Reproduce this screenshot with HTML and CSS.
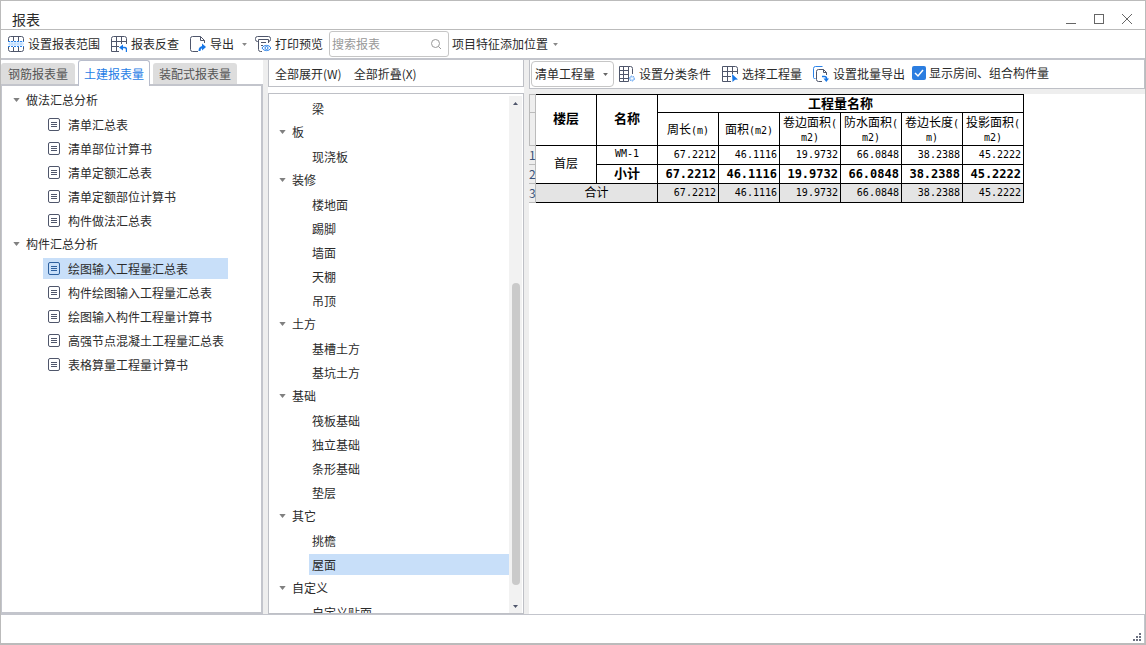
FILE: index.html
```html
<!DOCTYPE html>
<html lang="zh-CN">
<head>
<meta charset="utf-8">
<title>报表</title>
<link rel="stylesheet" href="styles.css">
</head>
<body>
<svg class="defs" width="0" height="0" aria-hidden="true">
  <symbol id="doc" viewBox="0 0 14 14"><rect x="1.5" y=".5" width="11" height="12" rx="1.5" fill="none" stroke="currentColor"/><path d="M4 4.500h6M4 6.500h6M4 8.500h6" stroke="currentColor"/></symbol>
  <symbol id="caret" viewBox="0 0 8 5"><path d="M0 0h8L4 5z" fill="currentColor"/></symbol>
</svg>
<div class="window">
  <header class="titlebar">
    <h1>报表</h1>
    <div class="window-buttons">
      <button aria-label="最小化"><svg width="12" height="12"><path d="M1 10.500h10" stroke="currentColor"/></svg></button>
      <button aria-label="最大化"><svg width="12" height="12"><rect x="1.500" y="1.500" width="9" height="9" fill="none" stroke="currentColor"/></svg></button>
      <button aria-label="关闭"><svg width="12" height="12"><path d="M1 1l10 10M11 1L1 11" stroke="currentColor"/></svg></button>
    </div>
  </header>

  <div class="toolbar main-toolbar">
    <button class="tool"><svg width="16" height="16" fill="none"><rect x="1" y="5" width="14" height="5" fill="#d6eaff"/><path d="M.5 5V2.500a2 2 0 0 1 2-2h11a2 2 0 0 1 2 2V5M.5 11v2.500a2 2 0 0 0 2 2h11a2 2 0 0 0 2-2V11M5.500.5V5M10.500.5V5M5.500 11v4.500M10.500 11v4.500" stroke="#4f566b"/><path d="M0 5.500h16M0 10.500h16" stroke="#2b83ea" stroke-dasharray="2 1"/><path d="M.5 8h16" stroke="#7bb5f5" stroke-dasharray="1 2"/></svg>设置报表范围</button>
    <button class="tool gap-l"><svg width="16" height="16" fill="none"><path d="M15.500 8V2.500a2 2 0 0 0-2-2h-11a2 2 0 0 0-2 2v13H8M.5 5.500h15M.5 10.500H8M5.500.5v15M10.500.5V8" stroke="#4f566b"/><path d="M10 11.500h3.500a2 2 0 0 1 2 2V16" stroke="#1677e8" stroke-width="1.400"/><path d="M12 8.500v6l-4-3z" fill="#1677e8"/></svg>报表反查</button>
    <button class="tool gap-l"><svg width="16" height="16" fill="none"><path d="M8 15.500H2.500a2 2 0 0 1-2-2v-11a2 2 0 0 1 2-2h8l4 4V7M10.500.5v4h4" stroke="#4f566b"/><path d="M9.500 15c0-3 1.500-4 4-4" stroke="#1677e8" stroke-width="2"/><path d="M12 7.500l4 3.500-4 3.500z" fill="#1677e8"/></svg>导出</button>
    <button class="drop" aria-label="导出选项"><svg width="5" height="3"><use href="#caret"/></svg></button>
    <button class="tool"><svg width="16" height="16" fill="none"><path d="M3.500 5.500h-1a2 2 0 0 1-2-2v-1a2 2 0 0 1 2-2h11a2 2 0 0 1 2 2v1a2 2 0 0 1-2 2M13.500 7V3.500h-10v10a2 2 0 0 0 2 2H7M6 6.500h5M6 9.500h2" stroke="#4f566b"/><path d="M7 12c2-3.500 7-3.500 9 0-2 3.500-7 3.500-9 0z" stroke="#2b83ea" fill="#fff"/><circle cx="11.500" cy="12" r="1.500" stroke="#2b83ea"/></svg>打印预览</button>
    <label class="search"><input type="text" placeholder="搜索报表" aria-label="搜索报表"><svg width="12" height="12" fill="none" stroke="#999"><circle cx="5.500" cy="5.500" r="4"/><path d="M8.500 8.500l2.500 2.500"/></svg></label>
    <button class="tool feature">项目特征添加位置<svg class="small-caret" width="5" height="3"><use href="#caret"/></svg></button>
  </div>

  <main class="workspace">
    <section class="reports">
      <div class="tabs" role="tablist">
        <button role="tab">钢筋报表量</button>
        <button role="tab" class="active" aria-selected="true">土建报表量</button>
        <button role="tab">装配式报表量</button>
      </div>
      <div class="report-tree">
        <ul class="tree">
          <li><button class="group"><svg width="7" height="4"><use href="#caret"/></svg>做法汇总分析</button>
            <ul>
              <li><button class="leaf"><svg width="14" height="14"><use href="#doc"/></svg>清单汇总表</button></li>
              <li><button class="leaf"><svg width="14" height="14"><use href="#doc"/></svg>清单部位计算书</button></li>
              <li><button class="leaf"><svg width="14" height="14"><use href="#doc"/></svg>清单定额汇总表</button></li>
              <li><button class="leaf"><svg width="14" height="14"><use href="#doc"/></svg>清单定额部位计算书</button></li>
              <li><button class="leaf"><svg width="14" height="14"><use href="#doc"/></svg>构件做法汇总表</button></li>
            </ul>
          </li>
          <li><button class="group"><svg width="7" height="4"><use href="#caret"/></svg>构件汇总分析</button>
            <ul>
              <li><button class="leaf selected"><svg width="14" height="14"><use href="#doc"/></svg>绘图输入工程量汇总表</button></li>
              <li><button class="leaf"><svg width="14" height="14"><use href="#doc"/></svg>构件绘图输入工程量汇总表</button></li>
              <li><button class="leaf"><svg width="14" height="14"><use href="#doc"/></svg>绘图输入构件工程量计算书</button></li>
              <li><button class="leaf"><svg width="14" height="14"><use href="#doc"/></svg>高强节点混凝土工程量汇总表</button></li>
              <li><button class="leaf"><svg width="14" height="14"><use href="#doc"/></svg>表格算量工程量计算书</button></li>
            </ul>
          </li>
        </ul>
      </div>
    </section>

    <section class="components">
      <div class="fold-bar"><button>全部展开(W)</button><button>全部折叠(X)</button></div>
      <div class="component-list">
        <ul class="tree">
          <li><ul><li><button class="leaf">梁</button></li></ul></li>
          <li><button class="group"><svg width="7" height="4"><use href="#caret"/></svg>板</button>
            <ul><li><button class="leaf">现浇板</button></li></ul></li>
          <li><button class="group"><svg width="7" height="4"><use href="#caret"/></svg>装修</button>
            <ul>
              <li><button class="leaf">楼地面</button></li>
              <li><button class="leaf">踢脚</button></li>
              <li><button class="leaf">墙面</button></li>
              <li><button class="leaf">天棚</button></li>
              <li><button class="leaf">吊顶</button></li>
            </ul></li>
          <li><button class="group"><svg width="7" height="4"><use href="#caret"/></svg>土方</button>
            <ul>
              <li><button class="leaf">基槽土方</button></li>
              <li><button class="leaf">基坑土方</button></li>
            </ul></li>
          <li><button class="group"><svg width="7" height="4"><use href="#caret"/></svg>基础</button>
            <ul>
              <li><button class="leaf">筏板基础</button></li>
              <li><button class="leaf">独立基础</button></li>
              <li><button class="leaf">条形基础</button></li>
              <li><button class="leaf">垫层</button></li>
            </ul></li>
          <li><button class="group"><svg width="7" height="4"><use href="#caret"/></svg>其它</button>
            <ul>
              <li><button class="leaf">挑檐</button></li>
              <li><button class="leaf selected">屋面</button></li>
            </ul></li>
          <li><button class="group"><svg width="7" height="4"><use href="#caret"/></svg>自定义</button>
            <ul><li><button class="leaf">自定义贴面</button></li></ul></li>
        </ul>
        <div class="scrollbar" aria-hidden="true">
          <svg width="5" height="3"><path d="M0 3h5L2.500 0z" fill="#4f566b"/></svg>
          <div class="track"><div class="thumb"></div></div>
          <svg width="5" height="3"><path d="M0 0h5L2.500 3z" fill="#4f566b"/></svg>
        </div>
      </div>
    </section>

    <section class="result">
      <div class="toolbar result-toolbar">
        <div class="select-wrap"><select aria-label="工程量类型"><option>清单工程量</option></select><svg width="5" height="3"><use href="#caret"/></svg></div>
        <button class="tool"><svg width="16" height="16" fill="none"><path d="M9.500 15.500h-9V.5h9v15M.5 4.500h9M.5 8.500h9M.5 12.500h9M4.500.5v15M9.500.5h2a2 2 0 0 1 2 2V8" stroke="#4f566b"/><circle cx="13" cy="12.500" r="2.500" fill="#b9d8fb" stroke="#5b9ff0" stroke-dasharray="1.500 1"/><circle cx="13" cy="12.500" r="1" fill="#fff"/></svg>设置分类条件</button>
        <button class="tool gap-l"><svg width="16" height="16" fill="none"><path d="M15.500 8V2.500a2 2 0 0 0-2-2H.5v15H9M.5 5.500h15M.5 10.500H9M5.500.5v15M10.500.5V8" stroke="#4f566b"/><path d="M10 8l6 5.500-3 .2L10.500 16z" fill="#1677e8"/></svg>选择工程量</button>
        <button class="tool gap-l"><svg width="16" height="16" fill="none"><path d="M2.500 12.500h-1a1 1 0 0 1-1-1v-9a2 2 0 0 1 2-2h7" stroke="#2b83ea"/><path d="M9 15.500H5.500a2 2 0 0 1-2-2v-8a2 2 0 0 1 2-2h5l3 3V9M10.500 3.500v3h3" stroke="#4f566b"/><path d="M9 10.500h2.500a2 2 0 0 1 2 2V14" stroke="#1677e8" stroke-width="1.500"/><path d="M10.500 12.500h5.500L13.300 16z" fill="#1677e8"/></svg>设置批量导出</button>
        <label class="check"><input type="checkbox" checked>显示房间、组合构件量</label>
      </div>
      <div class="sheet">
        <table>
          <colgroup><col class="index-col"><col span="8" class="data-col"></colgroup>
          <thead>
            <tr><td class="index"></td><th rowspan="2">楼层</th><th rowspan="2">名称</th><th colspan="6">工程量名称</th></tr>
            <tr class="units"><td class="index"></td>
              <th>周长<span>(m)</span></th><th>面积<span>(m2)</span></th>
              <th>卷边面积<span>(<br>m2)</span></th><th>防水面积<span>(<br>m2)</span></th>
              <th>卷边长度<span>(<br>m)</span></th><th>投影面积<span>(<br>m2)</span></th></tr>
          </thead>
          <tbody>
            <tr><td class="index">1</td><td class="name" rowspan="2">首层</td><td class="code">WM-1</td><td>67.2212</td><td>46.1116</td><td>19.9732</td><td>66.0848</td><td>38.2388</td><td>45.2222</td></tr>
            <tr class="subtotal"><td class="index">2</td><td class="name">小计</td><td>67.2212</td><td>46.1116</td><td>19.9732</td><td>66.0848</td><td>38.2388</td><td>45.2222</td></tr>
            <tr class="total"><td class="index">3</td><td class="name" colspan="2">合计</td><td>67.2212</td><td>46.1116</td><td>19.9732</td><td>66.0848</td><td>38.2388</td><td>45.2222</td></tr>
          </tbody>
        </table>
      </div>
    </section>
  </main>

  <footer class="statusbar">
    <svg width="9" height="9" fill="#6b7080"><path d="M7 1h2v2H7zM4 4h2v2H4zM7 4h2v2H7zM1 7h2v2H1zM4 7h2v2H4zM7 7h2v2H7z"/></svg>
  </footer>
</div>
</body>
</html>
```
FILE: styles.css
```css
* { box-sizing: border-box; }

body {
  margin: 0;
  color: #2b2b2b;
  background: #fff;
  font: 12px/16px "Noto Sans CJK SC", sans-serif;
}

button, input, select {
  margin: 0;
  padding: 0;
  border: 0;
  background: none;
  color: inherit;
  font: inherit;
}

button { white-space: nowrap; }
svg { flex: none; }
ul { margin: 0; padding: 0; list-style: none; }
.defs { position: absolute; }

.window {
  display: flex;
  flex-direction: column;
  height: 100vh;
  border: 1px solid #bbb;
  border-bottom-width: 2px;
}

/* title bar */
.titlebar {
  display: flex;
  align-items: center;
  justify-content: space-between;
  height: 28px;
  padding: 8px 12px 0 11px;
}
.titlebar h1 { margin: 0; font-size: 14px; font-weight: 400; line-height: 20px; }
.window-buttons { display: flex; gap: 16px; color: #666; }
.window-buttons button { display: flex; }

/* toolbars */
.toolbar { display: flex; align-items: center; }
.tool { display: flex; align-items: center; gap: 4px; }
.tool.gap-l { margin-left: 11px; }
.tool .small-caret { margin-left: 1px; color: #888; }

.main-toolbar {
  flex: none;
  height: 31px;
  padding: 0 7px;
  border-top: 1px solid #bbb;
  border-bottom: 2px solid #c3c5cc;
}
.drop { display: flex; margin: 0 8px; color: #888; }
.search {
  display: flex;
  align-items: center;
  width: 120px;
  height: 26px;
  margin: 0 3px 0 6px;
  padding: 0 6px 0 2px;
  border: 1px solid #c6c6c6;
  border-radius: 3px;
}
.search input { flex: 1; min-width: 0; outline: 0; }
.search input::placeholder { color: #999; opacity: 1; }

/* three-pane workspace */
.workspace {
  display: grid;
  grid-template-columns: 262px 256px minmax(0, 1fr);
  gap: 5px;
  flex: 1;
  min-height: 0;
  background: #eee;
}
.workspace > section { display: flex; flex-direction: column; min-height: 0; background: #fff; }

.tabs {
  display: flex;
  align-items: flex-end;
  gap: 3px;
  flex: none;
  height: 26px;
  background: linear-gradient(#c3c5cc, #c3c5cc) bottom / 100% 2px no-repeat;
}
.tabs button {
  height: 21px;
  margin-bottom: 2px;
  padding: 0 7px;
  border-radius: 3px 3px 0 0;
  background: #ddd;
  color: #555;
}
.tabs button:last-child { padding: 0 6px; }
.tabs button.active {
  height: 26px;
  margin-bottom: 0;
  padding: 0 5px;
  border: 1px solid #b8bdcc;
  border-bottom: 0;
  background: #fff;
  color: #1f7de6;
}
.report-tree {
  flex: 1;
  min-height: 0;
  padding: 2px 0 0 1px;
  overflow: hidden;
  border: solid #c3c5cc;
  border-width: 0 2px 2px 1px;
}

/* trees */
.tree ul > li { padding: 2px 0 1px 40px; }
.group { display: flex; align-items: center; gap: 6px; height: 24px; padding-left: 10px; }
.group svg { color: #808080; }
.leaf {
  display: flex;
  align-items: center;
  gap: 7px;
  width: 185px;
  height: 21px;
  padding-left: 4px;
}
.leaf svg { color: #4f566b; }
.leaf.selected { background: #c8dff9; }
.report-tree .selected svg { color: #2c5f9e; }

.fold-bar {
  display: flex;
  align-items: center;
  gap: 12px;
  flex: none;
  height: 27px;
  margin-bottom: 6px;
  padding: 2px 0 0 6px;
  border: 1px solid #bec0c6;
  border-top: 0;
}
.component-list {
  display: flex;
  flex: 1;
  min-height: 0;
  padding: 2px 1px 0 0;
  overflow: hidden;
  border: 1px solid #bec0c6;
}
.component-list .tree { flex: 1; }
.component-list .leaf { width: 200px; padding-left: 3px; }
.scrollbar {
  display: flex;
  flex-direction: column;
  align-items: center;
  flex: none;
  width: 13px;
  padding: 6px 0 5px;
  background: #f2f2f2;
}
.track { flex: 1; padding: 178px 0 20px; }
.thumb { width: 8px; height: 100%; border-radius: 4px; background: #cacaca; }

/* result pane */
.result-toolbar {
  flex: none;
  height: 29px;
  padding-left: 1px;
  border: 1px solid #bec0c6;
  border-top: 0;
}
.select-wrap { display: flex; align-items: center; margin-right: 5px; border: 1px solid #c6c6c6; border-radius: 4px; color: #666; }
.select-wrap select { width: 71px; height: 24px; padding-left: 3px; appearance: none; color: #2b2b2b; }
.select-wrap svg { margin-right: 5px; }
.check { display: flex; align-items: center; gap: 3px; margin-left: 7px; padding-bottom: 2px; white-space: nowrap; }
.check input {
  width: 14px;
  height: 14px;
  appearance: none;
  border-radius: 2px;
  background: #2b7de0 url("data:image/svg+xml,%3Csvg xmlns='http://www.w3.org/2000/svg' viewBox='0 0 14 14'%3E%3Cpath d='M3 7l3 3 5-6' fill='none' stroke='white' stroke-width='1.5'/%3E%3C/svg%3E");
}
.sheet { flex: 1; min-height: 0; overflow: hidden; border-top: 5px solid #eee; }

table {
  width: 495px;
  table-layout: fixed;
  border-collapse: separate;
  border-spacing: 0;
  color: #000;
  line-height: 14px;
}
.index-col { width: 7px; }
.data-col { width: 61px; }
th, td { height: 19px; padding: 0; border: solid #000; border-width: 0 1px 1px 0; }
th { padding-bottom: 2px; font-size: 13px; font-weight: 700; }
tr:first-child > th { border-top-width: 1px; }
th[rowspan] { padding-bottom: 4px; }
td { padding-right: 2px; text-align: right; font: 10px/14px "DejaVu Sans Mono", monospace; }
.units th { height: 33px; padding: 0; font-size: 12px; font-weight: 400; }
.units span { font: 10px/0 "DejaVu Sans Mono", monospace; }
.name, .code { padding: 0 0 2px; text-align: center; }
.name { font: 12px/14px "Noto Sans CJK SC", sans-serif; }
.name[rowspan] { padding-bottom: 4px; }
.subtotal td { font-size: 12px; font-weight: 700; }
.subtotal .name { font-size: 13px; }
.total td { background: #e4e4e4; }
td.index, .total .index, .subtotal .index {
  padding: 0;
  border-right-color: #bbb;
  border-bottom-color: #bbb;
  background: #eee;
  color: #3a5378;
  font: 12px/16px "Noto Sans CJK SC", sans-serif;
  text-align: left;
}
thead .index { border-left: 1px solid #bbb; }
thead tr:first-child .index { border-top: 1px solid #bbb; }

/* status bar */
.statusbar {
  display: flex;
  align-items: flex-end;
  justify-content: flex-end;
  flex: none;
  height: 29px;
  padding: 0 3px 2px;
  border: solid #c3c5cc;
  border-width: 1px 1px 0 0;
}
```
